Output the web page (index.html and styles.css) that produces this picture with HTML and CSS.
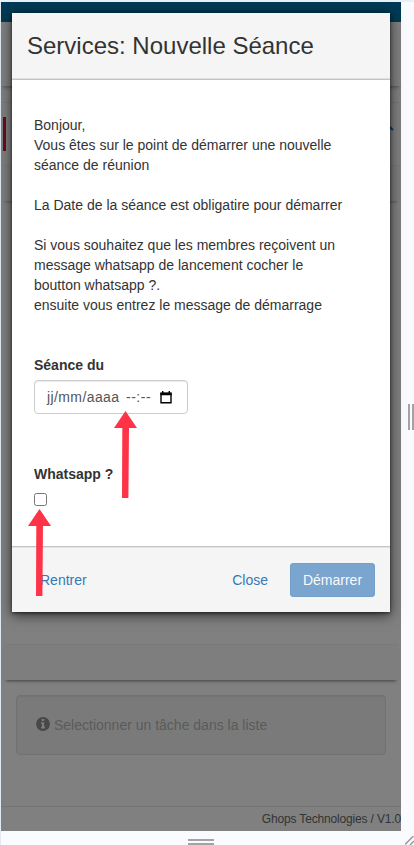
FILE: index.html
```html
<!DOCTYPE html>
<html lang="fr">
<head>
<meta charset="utf-8">
<meta name="viewport" content="width=device-width, initial-scale=1">
<title>Services: Nouvelle Séance</title>
<link rel="stylesheet" href="styles.css">
</head>
<body>
<div class="device">
  <div class="page">
    <div class="topbar"></div>
    <div class="subbar"></div>
    <div class="panel">
      <div class="panel-head"><span class="marker"></span>
        <svg class="chevron" width="9" height="6" viewBox="0 0 9 6"><path d="M0 5 4 1.5 8 5" fill="none" stroke="#123f60" stroke-width="2.2"/></svg>
      </div>
      <div class="panel-strip"></div>
    </div>
    <div class="content"></div>
    <div class="strip"></div>
    <div class="well">
      <svg class="info" width="14" height="14" viewBox="0 0 14 14"><circle cx="7" cy="7" r="6.9" fill="#484848"/><path d="M5.8 2h2.4v2H5.8zM5 5.2h3.2v4.6H9v1.6H5V9.8h.9V6.8H5z" fill="#7b7b7b"/></svg>
      <span>Selectionner un tâche dans la liste</span>
    </div>
    <footer class="page-footer">Ghops Technologies / V1.0</footer>
  </div>

  <section class="modal">
    <header class="modal-header"><h1>Services: Nouvelle Séance</h1></header>
    <div class="modal-body">
      <p>Bonjour,<br>Vous êtes sur le point de démarrer une nouvelle<br>séance de réunion<br><br>La Date de la séance est obligatire pour démarrer<br><br>Si vous souhaitez que les membres reçoivent un<br>message whatsapp de lancement cocher le<br>boutton whatsapp ?.<br>ensuite vous entrez le message de démarrage</p>
      <div class="field date-field">
        <span class="label">Séance du</span>
        <div class="date-input">
          <span class="date">jj/mm/aaaa</span><span class="time">--:--</span>
          <svg width="12" height="13" viewBox="0 0 12 13"><path d="M1 2.5h10v9.2H1z" fill="none" stroke="#000" stroke-width="1.4"/><path d="M.4 1.6h11.2v2.6H.4zM2 0h1.4v2H2zM8.6 0H10v2H8.6z"/></svg>
        </div>
      </div>
      <div class="field">
        <span class="label">Whatsapp ?</span>
        <span class="checkbox"></span>
      </div>
    </div>
    <footer class="modal-footer">
      <a class="link">Rentrer</a>
      <a class="link close">Close</a>
      <a class="button">Démarrer</a>
    </footer>
  </section>
</div>

<svg class="arrow arrow-date" width="24" height="88" viewBox="0 0 24 88"><path d="M11.5 0 23 17h-8l-.6 70H8l.3-70H0z"/></svg>
<svg class="arrow arrow-check" width="24" height="88" viewBox="0 0 24 88"><path d="M11.5 0 23 17h-8l-.6 70H8l.3-70H0z"/></svg>

<span class="grip grip-right"></span>
<span class="grip grip-bottom"></span>
<svg class="grip-corner" width="9" height="9" viewBox="0 0 9 9"><path d="M0 8.5 8.5 0M5 9 9 5" fill="none" stroke="#999" stroke-width="1.5"/></svg>
</body>
</html>
```
FILE: styles.css
```css
* { box-sizing: border-box; }
body {
  margin: 0;
  width: 414px;
  height: 845px;
  position: relative;
  overflow: hidden;
  padding: 2px 0 0 1px;
  background: #f9fbff;
  box-shadow: inset 0 2px #ebf0f8, inset 1px 0 #e3e9f3;
  font: 14px/20px "Liberation Sans", Arial, sans-serif;
  color: #333;
}
.device { position: relative; width: 400px; height: 829px; }
.page {
  height: 829px;
  display: flex;
  flex-direction: column;
  overflow: hidden;
  background: #808080;
}
.topbar { height: 20px; background: #003a55; }
.subbar { height: 64px; box-shadow: 0 3px 4px -2px rgba(0,0,0,.4); }
.panel { margin: 16px 2px 0; border-top: 1px solid #777; box-shadow: 0 3px 3px -2px rgba(0,0,0,.28); }
.panel-head {
  height: 63px;
  padding-top: 14px;
  display: flex;
  justify-content: space-between;
  border-bottom: 1px solid #7a7a7a;
}
.marker { width: 3px; height: 34px; background: #680d1d; }
.chevron { margin: 8px 5px 0 0; }
.panel-strip { height: 35px; background: #7e7e7e; }
.content { height: 443px; }
.strip {
  height: 36px;
  margin: 0 3px;
  background: #7e7e7e;
  border-top: 1px solid #7a7a7a;
  box-shadow: 0 3px 3px -2px rgba(0,0,0,.5);
}
.well {
  margin: 15px 15px 0;
  height: 60px;
  padding: 0 19px;
  display: flex;
  align-items: center;
  gap: 4px;
  color: #5b5b5b;
  background: #7a7a7a;
  border: 1px solid #717171;
  border-radius: 4px;
  box-shadow: inset 0 1px 1px rgba(0,0,0,.05);
}
.info { margin-top: -2px; }
.page-footer {
  margin-top: 51px;
  height: 25px;
  border-top: 1px solid #747474;
  font-size: 12px;
  line-height: 25px;
  letter-spacing: -.16px;
  text-align: right;
  color: #333;
}
.modal {
  position: absolute;
  left: 11px;
  top: 11px;
  width: 378px;
  height: 599px;
  display: flex;
  flex-direction: column;
  background: #fff;
  box-shadow: 0 3px 12px rgba(0,0,0,.65), 0 1px 3px rgba(0,0,0,.55);
}
.modal-header {
  height: 67px;
  padding: 0 15px;
  display: flex;
  align-items: center;
  background: #f5f5f5;
  border-bottom: 1px solid #c4c4c4;
  box-shadow: inset 0 -1px #e0e0e0;
}
h1 { margin: 0; font-size: 24px; line-height: 32px; font-weight: 400; }
.modal-body { flex: 1; padding: 35px 22px 0; }
p { margin: 0; white-space: nowrap; }
.label { display: block; font-weight: 700; }
.date-field { margin: 40px 0 50px; }
.date-input {
  width: 154px;
  height: 34px;
  margin-top: 5px;
  padding: 0 12px;
  display: flex;
  align-items: center;
  color: #555;
  border: 1px solid #ccc;
  border-radius: 4px;
  box-shadow: inset 0 1px 1px rgba(0,0,0,.075);
}
.date { width: 73px; letter-spacing: .4px; margin-right: 6px; }
.time { width: 26px; letter-spacing: .5px; margin-right: 8px; }
.date-input svg { flex: none; }
.checkbox {
  display: block;
  width: 13px;
  height: 13px;
  margin-top: 9px;
  border: 1px solid #767676;
  border-radius: 2.5px;
}
.modal-footer {
  height: 66px;
  padding: 0 15px 0 28px;
  display: flex;
  align-items: center;
  background: #f5f5f5;
  border-top: 1px solid #c4c4c4;
  box-shadow: inset 0 1px #e3e3e3;
}
.link { color: #337ab7; }
.close { margin-left: auto; margin-right: 22px; }
.button {
  width: 85px;
  height: 34px;
  line-height: 34px;
  text-align: center;
  color: #fafafa;
  background: #79a5cf;
  border-radius: 4px;
  box-shadow: inset 0 0 0 1px #739fc9;
}
.arrow { position: absolute; fill: #ff3347; }
.arrow-date { left: 114px; top: 411px; }
.arrow-check { left: 28px; top: 509px; }
.grip { position: absolute; }
.grip-right {
  left: 408px; top: 404px; width: 6px; height: 26px;
  border: solid #a3a3a3; border-width: 0 2px;
}
.grip-bottom {
  left: 188px; top: 839px; width: 26px; height: 6px;
  border: solid #a3a3a3; border-width: 2px 0;
}
.grip-corner { position: absolute; left: 405px; top: 836px; }
```
